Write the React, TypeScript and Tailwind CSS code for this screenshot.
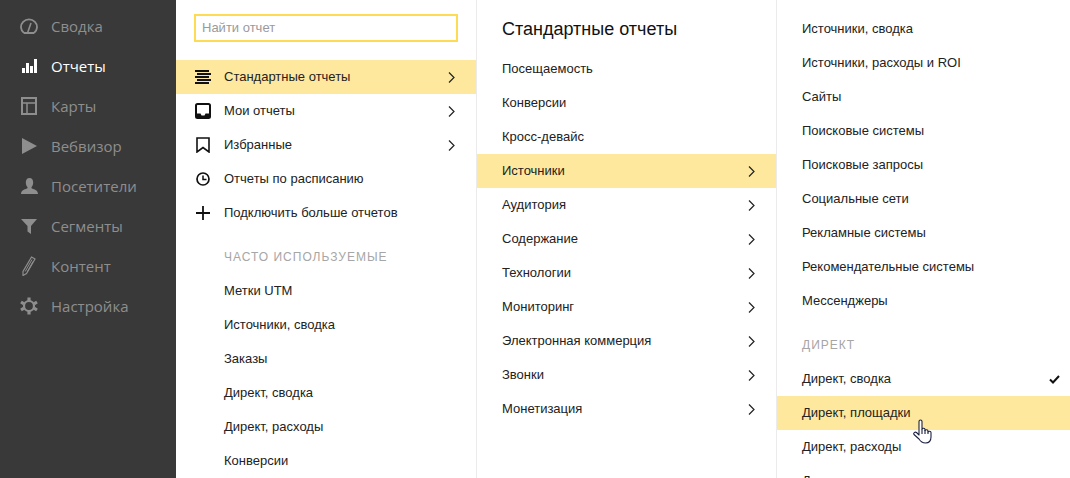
import type { ReactNode } from 'react'

const FONT_NAV = "font-['Open_Sans',sans-serif]"

const NAV: { label: string; active?: boolean; icon: ReactNode }[] = [
  {
    label: 'Сводка',
    icon: (
      <svg viewBox="0 0 18 16" className="w-[18px] h-[16px]" fill="none" stroke="currentColor">
        <path d="M4 15 H14 M4 15 A8 7.6 0 1 1 14 15" strokeWidth="1.8" />
        <path d="M7.5 15 L11 5" strokeWidth="1.6" />
      </svg>
    ),
  },
  {
    label: 'Отчеты',
    active: true,
    icon: (
      <svg viewBox="0 0 15 14" className="w-[15px] h-[14px]" fill="currentColor">
        <rect x="0" y="9" width="3" height="5" />
        <rect x="4" y="4" width="3" height="10" />
        <rect x="8" y="7" width="3" height="7" />
        <rect x="12" y="0" width="3" height="14" />
      </svg>
    ),
  },
  {
    label: 'Карты',
    icon: (
      <svg viewBox="0 0 16 18" className="w-[16px] h-[18px]" fill="none" stroke="currentColor" strokeWidth="2">
        <rect x="1" y="1" width="14" height="16" />
        <path d="M1 6 H15 M6 6 V17" strokeWidth="1.5" />
      </svg>
    ),
  },
  {
    label: 'Вебвизор',
    icon: (
      <svg viewBox="0 0 15 16" className="w-[15px] h-[16px]" fill="currentColor">
        <path d="M0 0 L15 8 L0 16 Z" />
      </svg>
    ),
  },
  {
    label: 'Посетители',
    icon: (
      <svg viewBox="0 0 17 16" className="w-[17px] h-[16px]" fill="currentColor">
        <path d="M8.5 0 C11 0 12.2 2 12.2 4.5 C12.2 6.8 11.2 8.4 10.4 9.2 L10.8 10.6 C13.5 11.4 17 12.4 17 16 L0 16 C0 12.4 3.5 11.4 6.2 10.6 L6.6 9.2 C5.8 8.4 4.8 6.8 4.8 4.5 C4.8 2 6 0 8.5 0 Z" />
      </svg>
    ),
  },
  {
    label: 'Сегменты',
    icon: (
      <svg viewBox="0 0 16 15" className="w-[16px] h-[15px]" fill="currentColor">
        <path d="M0 0 H16 L10 7 V15 L6.5 12.5 V7 Z" />
      </svg>
    ),
  },
  {
    label: 'Контент',
    icon: (
      <svg viewBox="0 0 14 20" className="w-[14px] h-[20px]" fill="none" stroke="currentColor" strokeWidth="1.2">
        <path d="M9.5 1 L13 3 L4.5 17.5 L1 19.5 L1 15.5 Z" />
        <path d="M3.2 15.5 L10 3.5 M5.2 16 L11 5.5" strokeWidth="1" />
      </svg>
    ),
  },
  {
    label: 'Настройка',
    icon: (
      <svg viewBox="0 0 18 18" className="w-[18px] h-[18px]" fill="none" stroke="currentColor">
        <circle cx="9" cy="9" r="5" strokeWidth="2.2" />
        <path d="M9 0.5 V4 M9 14 V17.5 M1 5 L4 6.8 M14 11.2 L17 13 M17 5 L14 6.8 M4 11.2 L1 13" strokeWidth="3.2" />
      </svg>
    ),
  },
]

const MAIN_ICONS: Record<string, ReactNode> = {
  lines: (
    <svg viewBox="0 0 16 14" className="w-[16px] h-[14px]" fill="currentColor">
      <rect x="0" y="0" width="14" height="2" />
      <rect x="2" y="3" width="14" height="2" />
      <rect x="0" y="6" width="14" height="2" />
      <rect x="2" y="9" width="14" height="2" />
      <rect x="0" y="12" width="14" height="2" />
    </svg>
  ),
  inbox: (
    <svg viewBox="0 0 16 16" className="w-[16px] h-[16px]" fill="none">
      <rect x="1" y="1" width="14" height="14" rx="1.5" stroke="currentColor" strokeWidth="2" />
      <path d="M1 10.5 H5.5 L6.5 12.5 H9.5 L10.5 10.5 H15 V15 H1 Z" fill="currentColor" />
    </svg>
  ),
  bookmark: (
    <svg viewBox="0 0 14 16" className="w-[14px] h-[16px]" fill="none" stroke="currentColor" strokeWidth="1.6">
      <path d="M1 1 H13 V15 L7 10.5 L1 15 Z" />
    </svg>
  ),
  clock: (
    <svg viewBox="0 0 14 14" className="w-[14px] h-[14px]" fill="none" stroke="currentColor">
      <circle cx="7" cy="7" r="6" strokeWidth="1.7" />
      <path d="M7 3.5 V7.5 H10.5" strokeWidth="1.5" />
    </svg>
  ),
  plus: (
    <svg viewBox="0 0 14 14" className="w-[14px] h-[14px]" fill="none" stroke="currentColor" strokeWidth="1.8">
      <path d="M7 0 V14 M0 7 H14" />
    </svg>
  ),
}

const Arrow = () => (
  <svg viewBox="0 0 7 11" className="w-[7px] h-[11px] text-[#222]" fill="none" stroke="currentColor" strokeWidth="1.2">
    <path d="M1 0.5 L6 5.5 L1 10.5" />
  </svg>
)

function Row({
  label,
  active,
  arrow,
  icon,
  pl = 'pl-[25px]',
  children,
}: {
  label: string
  active?: boolean
  arrow?: boolean
  icon?: ReactNode
  pl?: string
  children?: ReactNode
}) {
  return (
    <div className={`relative h-[34px] flex items-center ${pl} pr-[21px] text-[13px] text-[#222] ${active ? 'bg-[#fee89d]' : ''}`}>
      {icon && <span className="w-[16px] mr-[13px] flex justify-center text-[#111]">{icon}</span>}
      <span className="flex-1 whitespace-nowrap">{label}</span>
      {arrow && <Arrow />}
      {children}
    </div>
  )
}

const Heading = ({ children, className = '' }: { children: string; className?: string }) => (
  <div className={`text-[12px] tracking-[1px] text-[#a6a6a6] uppercase pl-[25px] ${className}`}>{children}</div>
)

const COL3 = ['Посещаемость', 'Конверсии', 'Кросс-девайс', 'Источники', 'Аудитория', 'Содержание', 'Технологии', 'Мониторинг', 'Электронная коммерция', 'Звонки', 'Монетизация']
const COL4 = ['Источники, сводка', 'Источники, расходы и ROI', 'Сайты', 'Поисковые системы', 'Поисковые запросы', 'Социальные сети', 'Рекламные системы', 'Рекомендательные системы', 'Мессенджеры']
const FREQUENT = ['Метки UTM', 'Источники, сводка', 'Заказы', 'Директ, сводка', 'Директ, расходы', 'Конверсии']

export default function App() {
  return (
    <div className="h-[478px] w-[1070px] flex overflow-hidden bg-white font-['Liberation_Sans',sans-serif]">
      {/* левое меню */}
      <div className={`w-[176px] shrink-0 bg-[#393939] pt-[6px] ${FONT_NAV}`}>
        {NAV.map(n => (
          <div key={n.label} className={`h-[40px] flex items-center text-[15px] ${n.active ? 'text-white font-medium' : 'text-[#8e8e8e]'}`}>
            <span className={`w-[18px] ml-[20px] mr-[13px] flex justify-center ${n.active ? 'text-white' : 'text-[#8e8e8e]'}`}>{n.icon}</span>
            {n.label}
          </div>
        ))}
      </div>

      {/* отчеты */}
      <div className="w-[301px] shrink-0 border-r border-[#ebebeb] pt-[14px]">
        <div className="mx-[18px] mb-[18px] h-[28px] w-[264px] border-2 border-[#fddb52] flex items-center pl-[6px] text-[13px] text-[#9a9a9a]">
          Найти отчет
        </div>
        <Row label="Стандартные отчеты" active arrow icon={MAIN_ICONS.lines} pl="pl-[19px]" />
        <Row label="Мои отчеты" arrow icon={MAIN_ICONS.inbox} pl="pl-[19px]" />
        <Row label="Избранные" arrow icon={MAIN_ICONS.bookmark} pl="pl-[19px]" />
        <Row label="Отчеты по расписанию" icon={MAIN_ICONS.clock} pl="pl-[19px]" />
        <Row label="Подключить больше отчетов" icon={MAIN_ICONS.plus} pl="pl-[19px]" />
        <Heading className="pl-[48px] mt-[20px] mb-[9px] leading-[15px]">Часто используемые</Heading>
        {FREQUENT.map(f => <Row key={f} label={f} pl="pl-[48px]" />)}
      </div>

      {/* стандартные отчеты */}
      <div className="w-[300px] shrink-0 border-r border-[#ebebeb]">
        <div className="pl-[25px] pt-[18px] pb-[12px] text-[18px] leading-[22px] text-[#111]">Стандартные отчеты</div>
        {COL3.map((c, i) => (
          <Row key={c} label={c} arrow={i > 2} active={c === 'Источники'} />
        ))}
      </div>

      {/* источники */}
      <div className="flex-1 pt-[12px]">
        {COL4.map(c => <Row key={c} label={c} />)}
        <Heading className="mt-[19px] mb-[8px] leading-[17px]">Директ</Heading>
        <Row label="Директ, сводка">
          <svg viewBox="0 0 11 9" className="w-[11px] h-[9px] -mr-[11px] text-[#111]" fill="none" stroke="currentColor" strokeWidth="2">
            <path d="M1 4.5 L4 7.5 L10 1" />
          </svg>
        </Row>
        <Row label="Директ, площадки" active>
          <svg viewBox="0 0 19 25" className="absolute left-[136px] top-[23px] w-[19px] h-[25px]" fill="#fff" stroke="#1c2140" strokeWidth="1.1" strokeLinejoin="round">
            <path d="M6 2.5 C6 0.5 9 0.5 9 2.5 V10 C9 9 12 9 12 10.5 V11.5 C12 10.5 15 10.5 15 12 V13 C15 12 18 12 18 13.5 L18 18 C18 21.5 16 24 12.5 24 C9 24 7.5 22.5 6 20 L1 15.5 C0 14 2 12.5 3.5 13.5 L6 16 Z" />
            <path d="M9 10 V15 M12 11 V15 M15 12.5 V15" />
          </svg>
        </Row>
        <Row label="Директ, расходы" />
        <Row label="Директ, конверсии" />
      </div>
    </div>
  )
}
